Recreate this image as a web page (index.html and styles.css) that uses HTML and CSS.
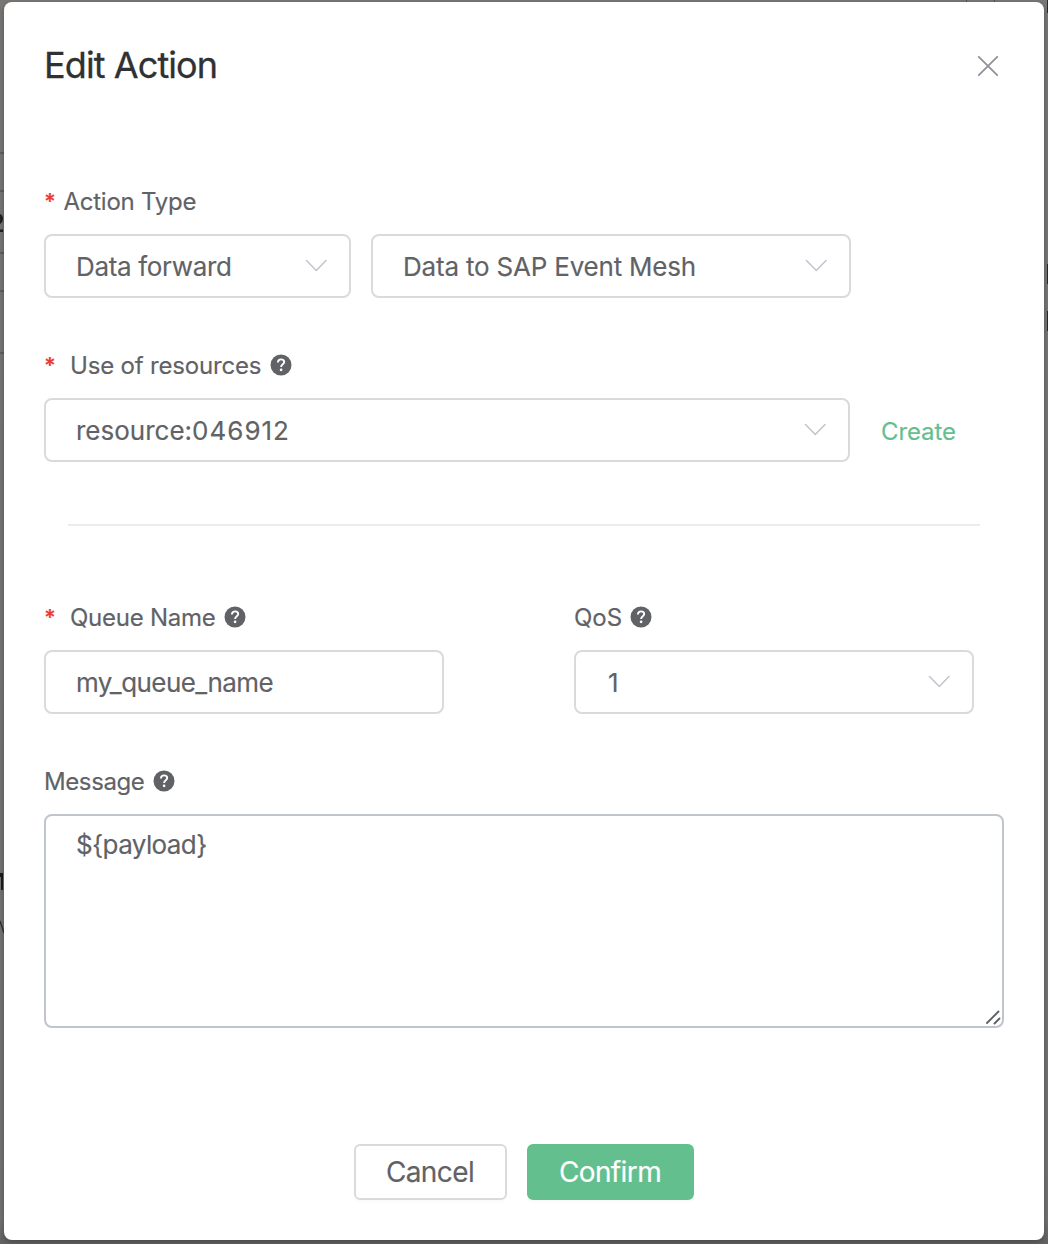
FILE: index.html
```html
<!DOCTYPE html>
<html lang="en">
<head>
<meta charset="utf-8">
<title>Edit Action</title>
<link rel="stylesheet" href="styles.css">
</head>
<body>
<svg class="defs" width="0" height="0" aria-hidden="true">
  <symbol id="chevron" viewBox="0 0 22 13"><path d="M1.500 1.500 L11.300 11.500 L21 1.500" fill="none" stroke="currentColor" stroke-width="1.500" stroke-linecap="round" stroke-linejoin="round"/></symbol>
  <symbol id="help" viewBox="0 0 22 22"><circle cx="11" cy="11" r="10.5" fill="currentColor"/><path d="M7.9 8.6 C7.9 6.6 9.2 5.4 11.1 5.4 C12.9 5.4 14.2 6.5 14.2 8.1 C14.2 10.2 11.1 10.4 11.1 12.9" fill="none" stroke="#fff" stroke-width="1.9"/><circle cx="11.1" cy="15.8" r="1.35" fill="#fff"/></symbol>
</svg>
<div class="backdrop" aria-hidden="true">
  <svg width="1048" height="1244" viewBox="0 0 1048 1244">
    <path d="M0 153h4M0 191h4M0 253h4M0 291h4M0 353h4" stroke="#61605f" stroke-width="2"/>
    <path d="M0 214 Q3 215 3 218.500 Q3 222 0 224z M0 229.500h3v2.500h-3z" fill="#222"/>
    <path d="M0 873h3v17h-2v-13h-1z" fill="#1c1c1c"/>
    <path d="M0 921L4 933" stroke="#333" stroke-width="1.500"/>
    <path d="M966.500 0v2M994.500 0v2" stroke="#555"/>
    <path d="M1047 0h1v13h-1zM1047 264h1v20h-1zM1047 311h1v20h-1z" fill="#292929"/>
  </svg>
</div>
<main class="modal">
  <header class="head">
    <h1 class="title">Edit Action</h1>
    <svg class="close" viewBox="0 0 22 22"><path d="M1.800 1.800L20.200 20.200M20.200 1.800L1.800 20.200" fill="none" stroke="currentColor" stroke-width="1.800" stroke-linecap="round"/></svg>
  </header>
  <section class="field">
    <div class="label"><span class="star">*</span><span class="t-type">Action Type</span></div>
    <div class="row">
      <div class="box kind"><span class="v-forward">Data forward</span><svg class="chev"><use href="#chevron"/></svg></div>
      <div class="box target"><span class="v-target">Data to SAP Event Mesh</span><svg class="chev"><use href="#chevron"/></svg></div>
    </div>
  </section>
  <section class="field">
    <div class="label"><span class="star wide">*</span><span class="t-use">Use of resources</span><svg class="help"><use href="#help"/></svg></div>
    <div class="row">
      <div class="box resource"><span>resource:<span class="digits">046912</span></span><svg class="chev"><use href="#chevron"/></svg></div>
      <a class="create">Create</a>
    </div>
  </section>
  <div class="divider"></div>
  <div class="pair">
    <section class="field half">
      <div class="label"><span class="star wide">*</span><span class="t-queue">Queue Name</span><svg class="help"><use href="#help"/></svg></div>
      <div class="box"><span class="v-queue">my_queue_name</span></div>
    </section>
    <section class="field half">
      <div class="label"><span class="t-qos">QoS</span><svg class="help"><use href="#help"/></svg></div>
      <div class="box"><span class="v-one">1</span><svg class="chev"><use href="#chevron"/></svg></div>
    </section>
  </div>
  <section class="field">
    <div class="label"><span class="t-message">Message</span><svg class="help"><use href="#help"/></svg></div>
    <div class="area"><span class="v-payload">${payload}</span>
      <svg class="grip" viewBox="0 0 16 16"><path d="M2 14L13.500 2.500M9.500 14.500L14.500 9.500" stroke="#606266" stroke-width="1.900" stroke-linecap="round"/></svg>
    </div>
  </section>
  <footer class="foot">
    <div class="btn cancel"><span>Cancel</span></div>
    <div class="btn confirm"><span>Confirm</span></div>
  </footer>
</main>
</body>
</html>
```
FILE: styles.css
```css
* { box-sizing: border-box; }
html { background: #777675; }
body {
  margin: 0;
  height: 1244px;
  padding: 2px 4px 4px;
  overflow: hidden;
  font-family: Inter, "Liberation Sans", sans-serif;
  -webkit-text-stroke: .15px currentColor;
  color: #606266;
  background: linear-gradient(to bottom, #797877, #737372 1220px, #656464 1240px);
}
.defs { position: absolute; }
.backdrop { position: absolute; left: 0; top: 0; width: 1048px; height: 1244px; }
.modal {
  position: relative;
  height: 1238px;
  padding: 0 40px;
  background: #fff;
  border-radius: 8px;
  box-shadow: 0 2px 6px rgba(0, 0, 0, .3);
}
.head { height: 168px; display: flex; justify-content: space-between; align-items: flex-start; }
.title { margin: 0; padding-top: 39px; font-size: 36px; line-height: 48px; font-weight: 400; letter-spacing: -.9px; color: #303133; -webkit-text-stroke-width: .3px; }
.close { width: 22px; height: 22px; margin: 53px 5px 0 0; color: #909399; }
.field { margin-bottom: 36px; }
.label { height: 64px; display: flex; align-items: center; font-size: 24px; line-height: 32px; white-space: nowrap; }
.star { flex: none; width: 19.5px; padding-bottom: 3px; color: #e63c35; font-weight: 600; font-size: 22px; }
.star.wide { width: 26px; }
.help { width: 22px; height: 22px; margin: -2px 0 0 8.3px; }
.row { display: flex; align-items: center; }
.box {
  height: 64px;
  display: flex;
  align-items: center;
  justify-content: space-between;
  padding: 2px 22px 0 30px;
  border: 2px solid #dadada;
  border-radius: 8px;
  font-size: 26px;
  line-height: 36px;
  white-space: nowrap;
}
.chev { width: 22px; height: 13px; margin-top: -3px; color: #c0c4cc; }
.kind { width: 307px; margin-right: 20px; }
.target { width: 480px; }
.resource { width: 806px; margin-right: 31px; }
.create { padding-top: 3px; font-size: 24px; line-height: 32px; letter-spacing: -.1px; color: #64bf8f; }
.t-type { letter-spacing: -.25px; }
.t-use { letter-spacing: -.18px; }
.t-queue { letter-spacing: -.25px; }
.t-message { letter-spacing: -.4px; }
.v-forward { letter-spacing: -.33px; }
.v-target { letter-spacing: -.2px; }
.digits { letter-spacing: 1px; }
.v-one { padding-left: 2px; }
.v-queue { letter-spacing: -.56px; }
.v-payload { letter-spacing: -.6px; }
.divider { height: 2px; margin: 62px 24px 60px; background: #ebecf0; }
.pair { display: flex; gap: 130px; }
.half { width: 400px; }
.area {
  display: flex;
  justify-content: space-between;
  height: 214px;
  padding: 11px 1px 1px 30px;
  border: 2px solid #c0c4cc;
  border-radius: 8px;
  font-size: 26px;
  line-height: 36px;
}
.grip { width: 16px; height: 16px; align-self: flex-end; }
.foot { display: flex; justify-content: center; gap: 20px; margin-top: 116px; }
.btn {
  height: 56px;
  display: flex;
  align-items: center;
  justify-content: center;
  padding-right: 1px;
  border: 2px solid #dadada;
  border-radius: 6px;
  font-size: 28px;
  line-height: 40px;
  letter-spacing: -.6px;
  box-shadow: 0 3px 2px rgba(0, 0, 0, .015);
}
.cancel { width: 153px; }
.confirm { width: 167px; color: #fff; background: #64bf8f; border-color: #64bf8f; }
```
